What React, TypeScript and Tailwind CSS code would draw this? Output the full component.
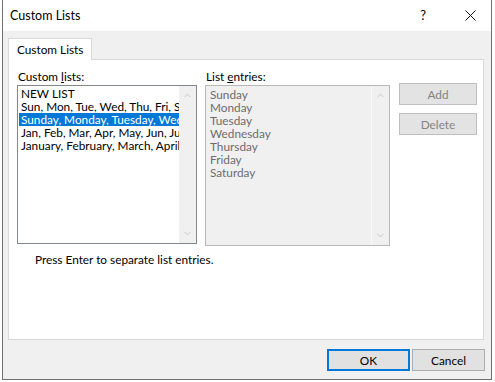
import { ChevronUp, ChevronDown } from "lucide-react";

const CUSTOM_LISTS = [
  "NEW LIST",
  "Sun, Mon, Tue, Wed, Thu, Fri, Sat",
  "Sunday, Monday, Tuesday, Wed",
  "Jan, Feb, Mar, Apr, May, Jun, Jul",
  "January, February, March, April",
];

const ENTRIES = ["Sunday", "Monday", "Tuesday", "Wednesday", "Thursday", "Friday", "Saturday"];

function ScrollTrack({ bg }: { bg: string }) {
  return (
    <div className={`flex w-[17px] shrink-0 flex-col items-center justify-between py-[4px] ${bg}`}>
      <ChevronUp size={11} strokeWidth={1.5} className="text-[#b5b5b5]" />
      <ChevronDown size={11} strokeWidth={1.5} className="text-[#b5b5b5]" />
    </div>
  );
}

export default function App() {
  return (
    <div
      className="h-[382px] w-[495px] overflow-hidden bg-white text-[11.8px] leading-[15px] text-black"
      style={{ fontFamily: '"Segoe UI", Lato, "Noto Sans", sans-serif' }}
    >
      <div className="ml-[2px] flex h-[380px] w-[490px] flex-col border-x border-b border-[#707070] bg-[#f0f0f0]">
        {/* title bar */}
        <div className="flex h-[31px] shrink-0 items-center bg-white pl-[7px]">
          <span className="text-[12.5px]">Custom Lists</span>
          <span className="ml-auto mr-[39px] text-[13px]">?</span>
          <svg width="11" height="11" viewBox="0 0 11 11" className="mr-[15px]">
            <path d="M0.5 0.5 L10.5 10.5 M10.5 0.5 L0.5 10.5" stroke="#111" strokeWidth="1" />
          </svg>
        </div>

        {/* tab */}
        <div className="pl-[5px] pt-[7px]">
          <div className="relative z-10 -mb-px flex h-[22px] w-[84px] items-center border border-b-0 border-[#d9d9d9] bg-white pl-[8px]">
            Custom Lists
          </div>
          <div className="h-[281px] w-[476px] border border-[#d9d9d9] bg-white pl-[8px] pt-[9px]">
            <div className="flex">
              <div className="flex w-[180px] flex-col">
                <div className="mb-[1px] h-[15px] pl-px">
                  Custom <u>l</u>ists:
                </div>
                <div className="flex h-[159px] border border-[#828790] bg-white">
                  <div className="min-w-0 flex-1 overflow-hidden pl-px pt-px">
                    {CUSTOM_LISTS.map((s, i) => (
                      <div
                        key={s}
                        className={`h-[13px] overflow-hidden whitespace-nowrap pl-[2px] leading-[13px] ${i === 2 ? "bg-[#0078d7] text-white" : ""}`}
                      >
                        {s}
                      </div>
                    ))}
                  </div>
                  <ScrollTrack bg="bg-[#f0f0f0]" />
                </div>
              </div>

              <div className="ml-[8px] flex w-[185px] flex-col">
                <div className="mb-[1px] h-[15px] pl-px">
                  List <u>e</u>ntries:
                </div>
                <div className="flex h-[161px] border border-[#b8b8b8] bg-[#f0f0f0]">
                  <div className="min-w-0 flex-1 overflow-hidden border-r border-[#f8f8f8] pl-[4px] pt-[2px] text-[#6d6d6d]">
                    {ENTRIES.map((s) => (
                      <div key={s} className="h-[13px] leading-[13px]">
                        {s}
                      </div>
                    ))}
                  </div>
                  <ScrollTrack bg="bg-[#f0f0f0]" />
                </div>
              </div>

              <div className="ml-[9px] mt-[14px] flex w-[78px] flex-col gap-[8px]">
                <div className="flex h-[22px] items-center justify-center border border-[#bfbfbf] bg-[#e3e3e3] text-[#838383]">
                  Add
                </div>
                <div className="flex h-[22px] items-center justify-center border border-[#bfbfbf] bg-[#e3e3e3] text-[#838383]">
                  Delete
                </div>
              </div>
            </div>

            <div className="mt-[6px] pl-[18px]">Press Enter to separate list entries.</div>
          </div>
        </div>

        {/* footer */}
        <div className="flex justify-end gap-[2px] pr-[6px] pt-[9px]">
          <div className="flex h-[22px] w-[83px] items-center justify-center border-2 border-[#0078d7] bg-[#e1e1e1]">
            OK
          </div>
          <div className="flex h-[22px] w-[73px] items-center justify-center border border-[#adadad] bg-[#e1e1e1]">
            Cancel
          </div>
        </div>
      </div>
    </div>
  );
}
